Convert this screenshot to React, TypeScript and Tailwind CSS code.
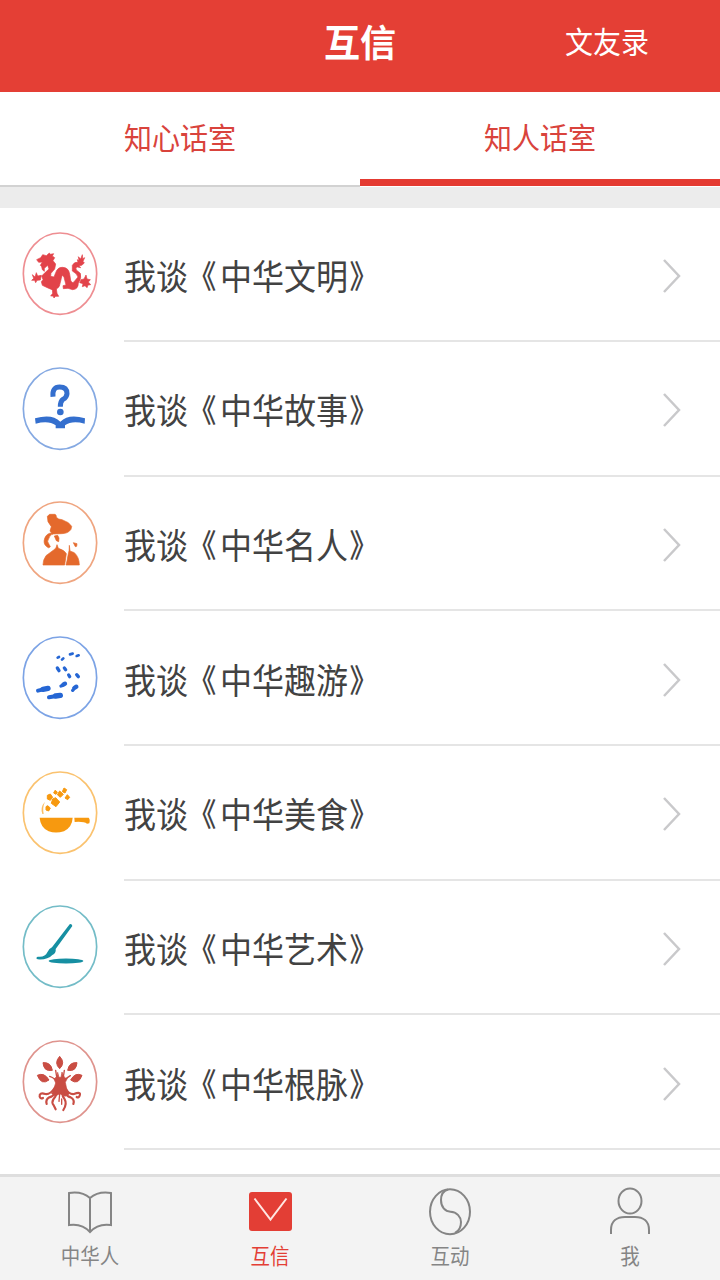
import type { ReactNode } from 'react';

interface TopicProps {
    name: string;
    color: string;
    icon: ReactNode;
}

interface NavItemProps {
    label: string;
    active?: boolean;
    children: ReactNode;
}

const topics: TopicProps[] = [
    {
        name: '中华文明',
        color: 'text-[#e2434a]',
        icon: (
            <g fill="currentColor" stroke="currentColor" strokeWidth="2" strokeLinejoin="round">
                <path d="M80 104 L92 98 L98 89 L109 92 L118 84 L121 88 L131 86 L127 93 L134 98 L129 107 L137 117 L134 132 L123 145 L122 154 L132 156 L137 143 Q143 126 158 127 Q176 128 179 147 L182 166 Q187 178 194 168 L204 156 Q199 144 187 138 L187 121 Q193 109 204 112 L202 104 L207 106 L205 95 L212 102 L217 89 L218 101 L224 98 L219 109 L223 114 L215 121 L207 122 L212 128 L202 126 Q195 127 199 135 L211 145 Q216 160 205 174 Q205 193 188 194 L174 190 L160 191 L159 182 L168 180 L162 157 Q157 145 154 160 L148 184 Q142 195 126 194 L112 188 L97 181 L94 170 L99 164 L95 153 L106 142 L117 132 L113 121 L103 130 L103 139 L97 134 L95 125 L91 121 L97 111 L86 112 Z" />
                <path d="M67 149 L75 156 L79 143 L83 153 L94 151 L91 165 L81 166 L77 173 L74 166 L65 166 L71 160 Z" />
                <path d="M127 192 L139 192 L141 205 L146 214 L137 214 L132 219 L129 213 L122 213 L128 205 Z" />
                <path d="M213 164 L222 162 L228 150 L231 162 L241 164 L235 171 L242 179 L234 180 L231 188 L225 182 L217 185 L219 176 L209 173 Z" />
            </g>
        ),
    },
    {
        name: '中华故事',
        color: 'text-[#346fce]',
        icon: (
            <g>
                <path d="M129 110 Q126 81 149 81 Q171 81 171 101 Q170 112 159 118 Q151 124 151 140" fill="none" stroke="currentColor" strokeWidth="15" />
                <circle cx="151" cy="156" r="10" fill="currentColor" />
                <path d="M75 175 Q126 160 151 185 Q176 160 225 175 L224 191 Q186 180 165 196 L165 205 L137 205 L137 196 Q116 180 77 191 Z" fill="currentColor" />
            </g>
        ),
    },
    {
        name: '中华名人',
        color: 'text-[#e4692c]',
        icon: (
            <g fill="currentColor" stroke="currentColor" strokeWidth="2" strokeLinejoin="round">
                <path d="M112 67 L119 61 L135 61 Q140 63 139 70 Q145 77 156 77 L175 86 L185 97 L183 106 Q174 119 155 119 L127 120 L120 111 L124 98 L114 83 Z" />
                <path d="M129 120 Q120 121 117 132 Q109 142 117 151 L121 158 Q116 165 109 157 Q99 149 104 133 Q110 118 124 117 Z" />
                <path d="M133 126 L143 124 L147 132 L146 143 L139 140 Z" />
                <path d="M141 152 L145 163 Q164 169 169 179 L164 213 L99 213 Q98 199 108 185 L131 168 Q140 163 141 152 Z" />
                <path d="M178 154 L180 171 L193 176 Q208 190 208 213 L168 213 Q171 202 174 184 Q179 168 178 154 Z" />
                <path d="M190 146 L201 149 L200 157 L196 158 Z" />
            </g>
        ),
    },
    {
        name: '中华趣游',
        color: 'text-[#2566d4]',
        icon: (
            <g fill="none" stroke="currentColor" strokeLinecap="round">
                <path d="M84 185 L97 182 M117 205 L135 202" strokeWidth="12" />
                <path d="M99 181 L114 178 M137 201 L151 199" strokeWidth="16" />
                <path d="M153 171 L156 170 M188 184 L190 182" strokeWidth="10" />
                <path d="M160 167 L165 164 M193 177 L199 173" strokeWidth="13" />
                <path d="M142 117 L147 125 M163 117 L167 122 M176 138 L179 143 M200 137 L205 143" strokeWidth="10" />
                <path d="M143 86 L147 84 M156 92 L160 88 M180 76 L188 74 M200 81 L206 79" strokeWidth="8" />
            </g>
        ),
    },
    {
        name: '中华美食',
        color: 'text-[#f7990f]',
        icon: (
            <g fill="currentColor">
                <path d="M89 161 L188 161 Q187 188 162 202 Q137 209 116 202 Q91 190 89 161 Z" />
                <path d="M193 161 L236 161 Q241 166 238 178 L231 179 Q222 172 194 174 Z" />
                <path d="M97 150 Q90 129 105 113 Q97 130 101 150 Z" opacity=".65" />
                <path d="M112 94 L121 90 L128 100 L121 109 L112 105 Z M137 101 L149 114 L138 128 L124 118 L128 105 Z M149 81 L160 91 L151 100 L142 92 Z M162 72 L170 77 L165 87 L157 83 Z M172 92 L179 100 L173 107 L165 102 Z M135 79 L142 84 L138 91 L131 87 Z M113 125 L121 132 L116 141 L108 138 L108 128 Z" stroke="currentColor" strokeWidth="3" strokeLinejoin="round" />
            </g>
        ),
    },
    {
        name: '中华艺术',
        color: 'text-[#168fa2]',
        icon: (
            <g fill="currentColor">
                <path d="M179 79 Q185 76 187 84 L137 153 Q139 165 127 171 Q113 186 83 184 Q75 180 83 176 Q105 179 112 163 Q115 153 126 148 Z" />
                <ellipse cx="168" cy="189" rx="52" ry="7.5" />
            </g>
        ),
    },
    {
        name: '中华根脉',
        color: 'text-[#c94d43]',
        icon: (
            <g>
                <path d="M149 70 Q167 90 149 107 Q131 90 149 70 Z M99 89 Q123 87 127 112 Q101 117 99 89 Z M201 89 Q177 87 173 112 Q199 117 201 89 Z M82 127 Q103 117 117 141 Q94 158 82 127 Z M216 127 Q195 117 182 141 Q205 158 216 127 Z" fill="currentColor" stroke="currentColor" strokeWidth="3" strokeLinejoin="round" />
                <path d="M143 118 Q142 133 132 138 L137 150 Q133 165 125 182 L137 189 L149 182 L165 190 L178 183 Q167 165 166 148 L172 136 Q161 137 156 117 L153 133 L147 133 Z" fill="currentColor" stroke="currentColor" strokeWidth="2" />
                <g fill="none" stroke="currentColor" strokeLinecap="round" strokeWidth="6.5">
                    <path d="M134 165 Q121 185 106 183 Q87 177 89 191 Q92 199 99 195" />
                    <path d="M165 165 Q177 185 192 183 Q214 174 209 188 Q206 196 200 192" />
                    <path d="M136 179 Q130 190 118 193 Q106 199 110 213" />
                    <path d="M166 178 Q170 190 182 193 Q195 200 190 213" />
                    <path d="M139 180 Q138 192 130 199 Q124 209 131 217 L137 229" />
                    <path d="M157 180 Q157 192 164 199 Q172 212 160 231" />
                    <path d="M149 183 L147 205 M155 198 L155 214" strokeWidth="4" />
                    <path d="M137 140 Q126 132 119 130 M140 132 L137 112 M160 132 L163 112 M164 140 Q172 134 181 128" strokeWidth="4" />
                </g>
            </g>
        ),
    },
];

function Topic({ name, color, icon }: TopicProps) {
    return (
        <li className="flex h-[134.67px] pl-[10px]">
            <svg viewBox="0 0 300 300" className={`mt-[17.5px] size-[100px] shrink-0 ${color}`}>
                <ellipse cx="150" cy="146" rx="110" ry="122" fill="none" stroke="currentColor" strokeWidth="5" opacity=".6" />
                {icon}
            </svg>
            <div className="ml-[14px] flex flex-1 items-center justify-between border-b-2 border-[#e5e5e5] pr-[38px]">
                <span className="scale-y-[1.11] text-[32px] leading-none text-[#424242]">
                    我谈
                    <span className="inline-block -translate-x-0.5 scale-x-90 scale-y-90 font-medium">《</span>
                    {name}
                    <span className="inline-block scale-x-90 scale-y-90 font-medium">》</span>
                </span>
                <svg viewBox="0 0 20 36" className="mt-1 h-9 w-5" fill="none" stroke="#c9c9cb" strokeWidth="2.5">
                    <path d="M2 2 L17 18 L2 34" />
                </svg>
            </div>
        </li>
    );
}

function NavItem({ label, active, children }: NavItemProps) {
    return (
        <button className={`flex flex-1 flex-col items-center ${active ? 'text-[#e33e35]' : 'text-[#858585]'}`}>
            <svg viewBox="0 0 50 52" className="mt-2.5 h-[52px] w-[50px]" fill="none" stroke="currentColor" strokeWidth="2">
                {children}
            </svg>
            <span className="mt-1.5 scale-y-[1.08] text-[19.5px] leading-none">{label}</span>
        </button>
    );
}

export default function App() {
    return (
        <div className="flex h-[1280px] w-[720px] flex-col overflow-hidden bg-white font-['Noto_Sans_CJK_SC',sans-serif]">
            <header className="grid h-[92px] shrink-0 grid-cols-3 items-center bg-[#e43f35] text-white">
                <h1 className="col-start-2 -mt-3 scale-y-[1.04] text-center text-4xl leading-none font-bold">互信</h1>
                <span className="-mt-3 ml-[85px] scale-y-[1.06] text-[28px] leading-none">文友录</span>
            </header>

            <div className="grid h-[95px] shrink-0 grid-cols-2 text-[28px] leading-none text-[#d9433c]">
                <button className="flex items-center justify-center border-b-2 border-[#d2d2d2]">
                    <span className="-mt-1.5 scale-y-[1.06]">知心话室</span>
                </button>
                <button className="mb-px flex items-center justify-center border-b-7 border-[#e43a31]">
                    <span className="scale-y-[1.06]">知人话室</span>
                </button>
            </div>
            <div className="h-[20.5px] shrink-0 bg-[#ececec]" />

            <ul className="flex-1">
                {topics.map((topic) => (
                    <Topic key={topic.name} {...topic} />
                ))}
            </ul>

            <nav className="flex h-[106px] shrink-0 border-t-3 border-[#dedede] bg-[#f3f3f3]">
                <NavItem label="中华人">
                    <path d="M25 11 Q17 4 4 6 V38 Q17 36 25 45 Q33 36 46 38 V6 Q33 4 25 11 V45" />
                </NavItem>
                <NavItem label="互信" active>
                    <rect x="4" y="5" width="43" height="39" rx="3" fill="currentColor" stroke="none" />
                    <path d="M9.5 11.5 L25.5 32.5 L41.5 11.5" stroke="#ffe6e2" />
                </NavItem>
                <NavItem label="互动">
                    <ellipse cx="25" cy="24.7" rx="20" ry="22.5" />
                    <path d="M23 2.5 C18 4 16 8 16 13 C16 20 20 24.5 25.5 24.7 C32 25 36 30 36 35 C36 40 34 44 30 46" />
                </NavItem>
                <NavItem label="我">
                    <ellipse cx="25" cy="14" rx="11.5" ry="12.5" />
                    <path d="M6 47 V43 C6 34 12 30 20 30 H30 C38 30 44 34 44 43 V47" />
                </NavItem>
            </nav>
        </div>
    );
}
